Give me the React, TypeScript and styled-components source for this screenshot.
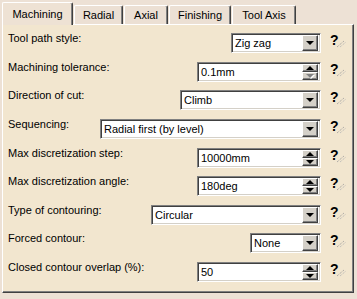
import React from 'react'
import styled, { createGlobalStyle } from 'styled-components'

const GlobalStyle = createGlobalStyle`
  html, body {
    margin: 0;
    padding: 0;
    background: #ede1d5;
  }
  body {
    font-family: 'Liberation Sans', Arial, sans-serif;
    font-size: 11px;
    color: #000;
  }
`

const Window = styled.div`
  width: 357px;
  height: 299px;
  box-sizing: border-box;
  padding: 2px 0 0 2px;
  background: #ede1d5;
  display: flex;
  flex-direction: column;
`

const TabBar = styled.div`
  display: flex;
  align-items: flex-end;
  gap: 1px;
  height: 22px;
  position: relative;
  z-index: 1;
`

const Tab = styled.div<{ $active?: boolean; $w: number }>`
  box-sizing: border-box;
  width: ${p => p.$w}px;
  height: ${p => (p.$active ? 23 : 19)}px;
  margin-bottom: ${p => (p.$active ? -1 : 0)}px;
  padding-top: ${p => (p.$active ? 5 : 3)}px;
  background: ${p => (p.$active ? '#eee2d4' : '#ece0d4')};
  border-top: 1px solid #fff;
  border-left: 1px solid #fff;
  border-right: 1px solid #404040;
  box-shadow: inset -1px 0 #808080;
  border-radius: 2px 2px 0 0;
  text-align: center;
  line-height: 13px;
  white-space: nowrap;
`

const Panel = styled.div`
  box-sizing: border-box;
  width: 352px;
  height: 269px;
  background: #f2e6cf;
  border-top: 1px solid #fff;
  border-left: 1px solid #fff;
  border-right: 1px solid #404040;
  border-bottom: 1px solid #404040;
  box-shadow: inset -1px -1px #808080;
  padding: 8px 0 0 5px;
  display: grid;
  grid-template-columns: minmax(0, 1fr) auto 32px;
  grid-auto-rows: 20px;
  row-gap: 8.625px;
`

const Label = styled.div`
  align-self: start;
  margin-top: -1px;
  line-height: 13px;
  white-space: nowrap;
`

const Field = styled.div<{ $w: number }>`
  box-sizing: border-box;
  width: ${p => p.$w}px;
  height: 20px;
  justify-self: end;
  display: flex;
  align-items: stretch;
  background: #fff;
  border: 1px solid;
  border-color: #808080 #fff #fff #808080;
  box-shadow: inset 1px 1px #404040, inset -1px -1px #d4d0c8;
  padding: 1px 2px 1px 1px;
`

const Value = styled.div`
  flex: 1;
  display: flex;
  align-items: center;
  padding-left: 2px;
  white-space: nowrap;
  overflow: hidden;
`

const DropButton = styled.div`
  box-sizing: border-box;
  width: 16px;
  background: #d4d0c8;
  border: 1px solid;
  border-color: #fff #404040 #404040 #fff;
  box-shadow: inset -1px -1px #808080;
  display: flex;
  align-items: center;
  justify-content: center;
`

const Arrow = styled.span<{ $up?: boolean; $off?: boolean }>`
  width: 0;
  height: 0;
  border-left: 4px solid transparent;
  border-right: 4px solid transparent;
  ${p =>
    p.$up
      ? `border-bottom: 4px solid ${p.$off ? '#808080' : '#000'};`
      : `border-top: 4px solid ${p.$off ? '#808080' : '#000'};`}
  ${p => (p.$off ? 'filter: drop-shadow(1px 1px 0 #fff);' : '')}
`

const SpinColumn = styled.div`
  width: 16px;
  display: flex;
  flex-direction: column;
`

const SpinButton = styled(DropButton)`
  width: 16px;
  flex: 1;
`

const Help = styled.div`
  display: flex;
  align-items: flex-start;
  padding-left: 9px;
`

const Mark = styled.span`
  font-weight: bold;
  font-size: 14px;
  line-height: 14px;
`

const Tail = styled.svg`
  margin-left: -3px;
  margin-top: 7px;
`

type Row = {
  label: string
  kind: 'combo' | 'spin'
  value: string
  width: number
  downOff?: boolean
}

const rows: Row[] = [
  { label: 'Tool path style:', kind: 'combo', value: 'Zig zag', width: 90 },
  { label: 'Machining tolerance:', kind: 'spin', value: '0.1mm', width: 124, downOff: true },
  { label: 'Direction of cut:', kind: 'combo', value: 'Climb', width: 141 },
  { label: 'Sequencing:', kind: 'combo', value: 'Radial first (by level)', width: 221 },
  { label: 'Max discretization step:', kind: 'spin', value: '10000mm', width: 124 },
  { label: 'Max discretization angle:', kind: 'spin', value: '180deg', width: 124 },
  { label: 'Type of contouring:', kind: 'combo', value: 'Circular', width: 170 },
  { label: 'Forced contour:', kind: 'combo', value: 'None', width: 71 },
  { label: 'Closed contour overlap (%):', kind: 'spin', value: '50', width: 124 }
]

const tabs = [
  { name: 'Machining', w: 71 },
  { name: 'Radial', w: 49 },
  { name: 'Axial', w: 44 },
  { name: 'Finishing', w: 62 },
  { name: 'Tool Axis', w: 64 }
]

const HelpIcon = () => (
  <Help>
    <Mark>?</Mark>
    <Tail width="10" height="8" viewBox="0 0 10 8">
      <line x1="1" y1="7" x2="8" y2="1" stroke="#9a9a9a" strokeWidth="1" strokeDasharray="1 1" />
      <line x1="4" y1="7" x2="10" y2="2" stroke="#b4b4b4" strokeWidth="1" strokeDasharray="1 1" />
    </Tail>
  </Help>
)

const App = () => (
  <Window>
    <GlobalStyle />
    <TabBar>
      {tabs.map((t, i) => (
        <Tab key={t.name} $w={t.w} $active={i === 0}>
          {t.name}
        </Tab>
      ))}
    </TabBar>
    <Panel>
      {rows.map(r => (
        <React.Fragment key={r.label}>
          <Label>{r.label}</Label>
          <Field $w={r.width}>
            <Value>{r.value}</Value>
            {r.kind === 'combo' ? (
              <DropButton>
                <Arrow />
              </DropButton>
            ) : (
              <SpinColumn>
                <SpinButton>
                  <Arrow $up />
                </SpinButton>
                <SpinButton>
                  <Arrow $off={r.downOff} />
                </SpinButton>
              </SpinColumn>
            )}
          </Field>
          <HelpIcon />
        </React.Fragment>
      ))}
    </Panel>
  </Window>
)

export default App
